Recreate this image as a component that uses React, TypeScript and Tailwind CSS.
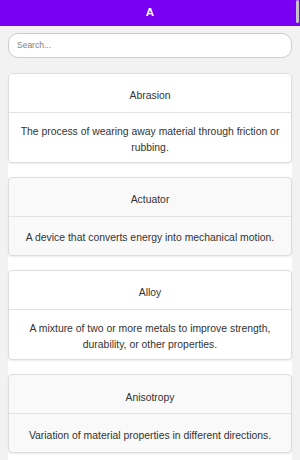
import React from "react";

const terms = [
  { t: "Abrasion", d: "The process of wearing away material through friction or rubbing." },
  { t: "Actuator", d: "A device that converts energy into mechanical motion." },
  { t: "Alloy", d: "A mixture of two or more metals to improve strength, durability, or other properties." },
  { t: "Anisotropy", d: "Variation of material properties in different directions." },
];

export default function App() {
  return (
    <div
      className="relative h-[460px] overflow-hidden bg-[#f2f2f2] text-[#333]"
      style={{ fontFamily: '"Liberation Sans", Arial, sans-serif' }}
    >
      <div className="h-[26px] bg-[#7a00f4] flex items-center justify-center">
        <span className="text-white font-bold text-[11.5px] leading-none">A</span>
      </div>
      <div className="absolute right-[1px] top-0 w-[3px] h-[23px] rounded-[2px] bg-[#c4c4c4]" />
      <div className="px-[8px] pt-[7px]">
        <div className="h-[25px] rounded-[10px] border border-[#cccccc] bg-white flex items-center px-[8px]">
          <span className="text-[8.5px] text-[#808080]">Search...</span>
        </div>
      </div>
      <div className="mx-[8px] mt-[15px] bg-white flex flex-col gap-[14px] pb-[30px]">
        {terms.map((item, i) => (
          <div
            key={item.t}
            className={
              "border border-[#dddddd] rounded-[4px] shadow-[0_1px_2px_rgba(0,0,0,0.08)] " +
              (i % 2 === 1 ? "bg-[#f9f9f9]" : "bg-white")
            }
          >
            <div className="h-[39px] pt-[6px] flex items-center justify-center text-[10.4px] leading-[15.6px] border-b border-[#e2e2e2]">
              {item.t}
            </div>
            <div className="min-h-[38px] pt-[11px] pb-[7px] px-[10px] flex items-center justify-center text-center text-[10.4px] leading-[15.6px]">
              {item.d}
            </div>
          </div>
        ))}
      </div>
    </div>
  );
}
